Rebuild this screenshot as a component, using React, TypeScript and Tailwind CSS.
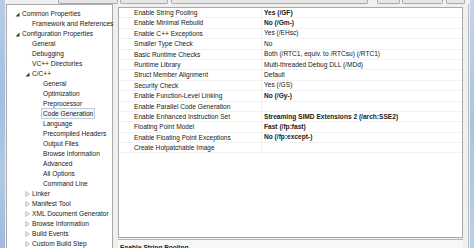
type TreeItem = {
  label: string;
  level: 0 | 1 | 2;
  toggle?: 'open' | 'closed';
  selected?: boolean;
};

const tree: TreeItem[] = [
  { label: 'Common Properties', level: 0, toggle: 'open' },
  { label: 'Framework and References', level: 1 },
  { label: 'Configuration Properties', level: 0, toggle: 'open' },
  { label: 'General', level: 1 },
  { label: 'Debugging', level: 1 },
  { label: 'VC++ Directories', level: 1 },
  { label: 'C/C++', level: 1, toggle: 'open' },
  { label: 'General', level: 2 },
  { label: 'Optimization', level: 2 },
  { label: 'Preprocessor', level: 2 },
  { label: 'Code Generation', level: 2, selected: true },
  { label: 'Language', level: 2 },
  { label: 'Precompiled Headers', level: 2 },
  { label: 'Output Files', level: 2 },
  { label: 'Browse Information', level: 2 },
  { label: 'Advanced', level: 2 },
  { label: 'All Options', level: 2 },
  { label: 'Command Line', level: 2 },
  { label: 'Linker', level: 1, toggle: 'closed' },
  { label: 'Manifest Tool', level: 1, toggle: 'closed' },
  { label: 'XML Document Generator', level: 1, toggle: 'closed' },
  { label: 'Browse Information', level: 1, toggle: 'closed' },
  { label: 'Build Events', level: 1, toggle: 'closed' },
  { label: 'Custom Build Step', level: 1, toggle: 'closed' },
];

const props: { name: string; value: string; bold?: boolean }[] = [
  { name: 'Enable String Pooling', value: 'Yes (/GF)', bold: true },
  { name: 'Enable Minimal Rebuild', value: 'No (/Gm-)', bold: true },
  { name: 'Enable C++ Exceptions', value: 'Yes (/EHsc)' },
  { name: 'Smaller Type Check', value: 'No' },
  { name: 'Basic Runtime Checks', value: 'Both (/RTC1, equiv. to /RTCsu) (/RTC1)' },
  { name: 'Runtime Library', value: 'Multi-threaded Debug DLL (/MDd)' },
  { name: 'Struct Member Alignment', value: 'Default' },
  { name: 'Security Check', value: 'Yes (/GS)' },
  { name: 'Enable Function-Level Linking', value: 'No (/Gy-)', bold: true },
  { name: 'Enable Parallel Code Generation', value: '' },
  { name: 'Enable Enhanced Instruction Set', value: 'Streaming SIMD Extensions 2 (/arch:SSE2)', bold: true },
  { name: 'Floating Point Model', value: 'Fast (/fp:fast)', bold: true },
  { name: 'Enable Floating Point Exceptions', value: 'No (/fp:except-)', bold: true },
  { name: 'Create Hotpatchable Image', value: '' },
];

const indent = { 0: 'pl-[15px]', 1: 'pl-[25px]', 2: 'pl-[36px]' };

function Toggle({ kind }: { kind: 'open' | 'closed' }) {
  if (kind === 'open') {
    return (
      <svg width="5" height="5" viewBox="0 0 5 5" className="absolute left-[-7px] top-[3px]">
        <path d="M4.5 0.5 L4.5 4.5 L0.5 4.5 Z" fill="#3a3a3a" />
      </svg>
    );
  }
  return (
    <svg width="5" height="6" viewBox="0 0 5 6" className="absolute left-[-7px] top-[2px]">
      <path d="M0.8 0.6 L4.2 3 L0.8 5.4 Z" fill="none" stroke="#a6a6a6" strokeWidth="0.8" />
    </svg>
  );
}

function TopControls() {
  const box = 'h-[4px] border-x border-b border-[#acacac] rounded-b-[2px] bg-[#e6e6e6]';
  return (
    <div className="flex h-[5px] items-start">
      <div className="w-[53px]" />
      <div className={`${box} w-[60px]`} />
      <div className="w-[2px]" />
      <div className={`${box} w-[48px]`} />
      <div className="w-[3px]" />
      <div className={`${box} w-[197px]`} />
      <div className="w-[9px]" />
      <div className={`${box} w-[23px]`} />
      <div className="w-[2px]" />
      <div className={`${box} w-[41px]`} />
      <div className="w-[3px]" />
      <div className={`${box} w-[19px]`} />
    </div>
  );
}

export default function App() {
  return (
    <div className="flex h-[248px] w-[474px] overflow-hidden bg-[#f0f0f0] font-['Liberation_Sans',Arial,sans-serif] text-[6.6px] text-[#202020]">
      <div className="w-[5px] shrink-0 bg-[linear-gradient(180deg,#b7cde8,#a3bedf_40%,#b2c9e5_70%,#9fbadb)]" />
      <div className="flex min-w-0 flex-1 flex-col">
        <TopControls />
        <div className="flex flex-1 items-start">
          <div className="ml-[1px] h-[260px] w-[107px] shrink-0 border border-[#a9a9a9] bg-white pt-[3px]">
            {tree.map((item, i) => (
              <div key={i} className={`flex h-[10px] items-center ${indent[item.level]}`}>
                <span
                  className={`relative whitespace-nowrap leading-[9px] ${
                    item.selected ? '-ml-[2px] border border-[#c3cedd] bg-[#f3f6fa] px-[1px]' : ''
                  }`}
                >
                  {item.toggle && <Toggle kind={item.toggle} />}
                  {item.label}
                </span>
              </div>
            ))}
          </div>
          <div className="ml-[5px] mt-[3px] flex w-[345px] shrink-0 flex-col">
            <div className="h-[231px] border border-[#a9a9a9] bg-white">
              {props.map((p) => (
                <div key={p.name} className="flex h-[10.4px] items-center border-b border-[#f2f2f2]">
                  <div className="h-full w-[143px] shrink-0 whitespace-nowrap border-r border-[#f0f0f0] pl-[15px] leading-[10px]">
                    {p.name}
                  </div>
                  <div className={`whitespace-nowrap pl-[2px] leading-[10px] ${p.bold ? 'font-bold' : ''}`}>
                    {p.value}
                  </div>
                </div>
              ))}
            </div>
            <div className="mt-[1px] h-[20px] border-t border-[#b5b5b5] bg-[#f7f7f7] pl-[2px] pt-[3px] font-bold">
              Enable String Pooling
            </div>
          </div>
          <div className="ml-[5px] h-[260px] w-[1px] bg-[#b9b9b9]" />
        </div>
      </div>
      <div className="w-[4px] shrink-0 bg-[linear-gradient(180deg,#c2d5ec,#aac3e2_50%,#b9cfe9)]" />
    </div>
  );
}
